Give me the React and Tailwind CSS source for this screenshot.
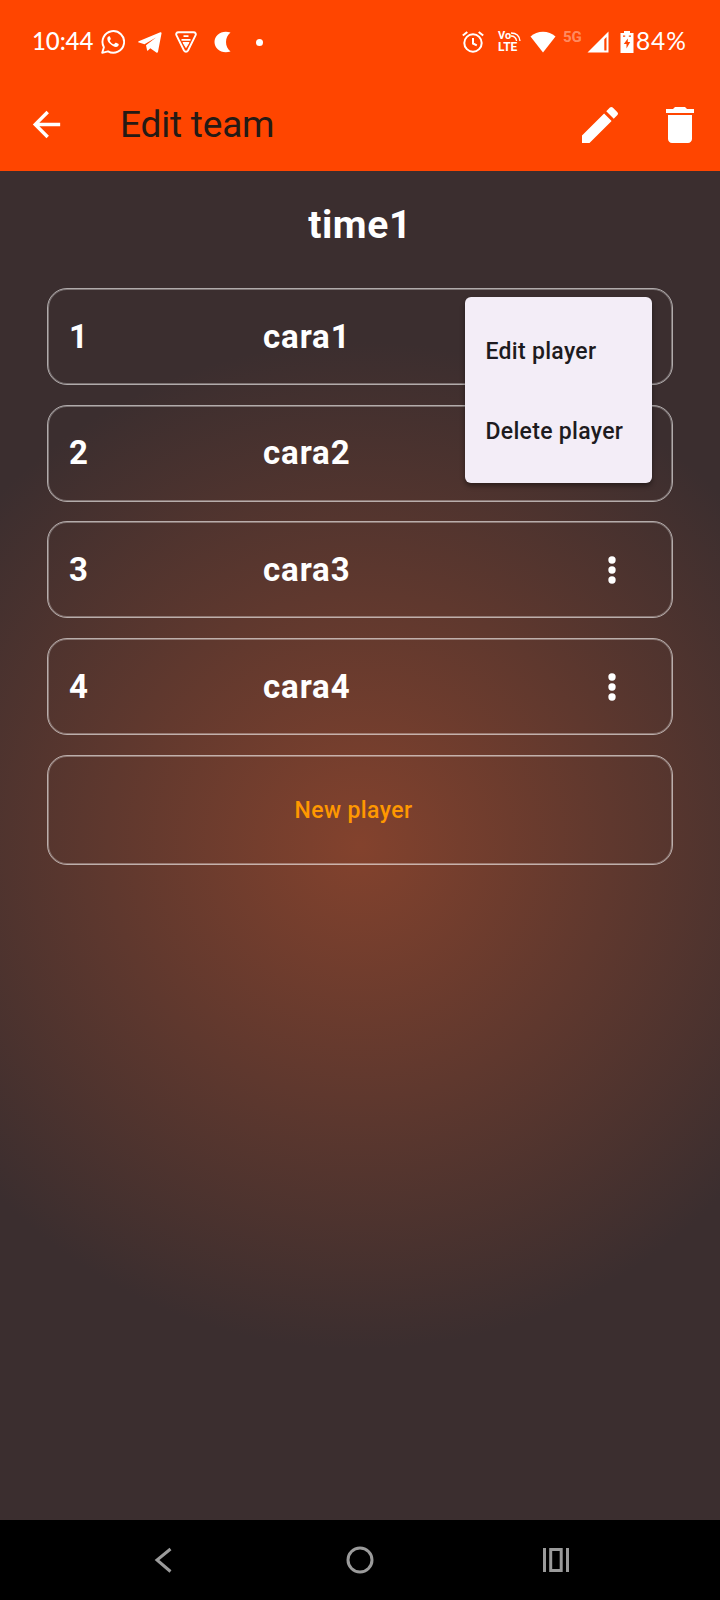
const players = ["cara1", "cara2", "cara3", "cara4"];

const cardClass =
  "rounded-[20px] border border-white/60 shadow-[inset_0_0_0_1px_rgba(255,255,255,0.32)]";

function StatusBar() {
  return (
    <div className="flex h-[84px] items-center pl-8 text-white">
      <span className="w-[62px] pb-[2px] font-['Lato'] text-[24px] leading-none font-medium tracking-[-0.1px]">10:44</span>
      <svg className="ml-[7px] h-6 w-6 shrink-0" viewBox="0 0 24 24" fill="none">
        <path d="M1.2 22.8 L2.9 17.2 A10.8 10.8 0 1 1 7 21.3 Z" stroke="currentColor" strokeWidth="1.9" strokeLinejoin="round" />
        <path d="M8.1 6.3c-.8 0-1.8 1-1.8 2.4 0 1.8 1.2 3.6 2.7 5.1 2 2 4.1 3.1 6 3.1 1.5 0 2.7-1 2.7-2.2 0-.5-.1-.7-.5-.9l-2.100-1c-.4-.2-.6-.1-.9.2l-.9 1.100c-.2.3-.5.3-.8.2-1.600-.7-2.900-1.900-3.700-3.400-.1-.3 0-.5.200-.7l.7-.9c.1-.2.2-.4.1-.6l-.9-2.100c-.1-.2-.3-.3-.8-.3z" fill="currentColor" />
      </svg>
      <svg className="ml-[13px] h-[21px] w-6 shrink-0" viewBox="0 0 24 21" fill="currentColor">
        <path d="M.7 9.3 22.3.3c.8-.3 1.400.2 1.200 1.100L20 19.800c-.2 1-.9 1.300-1.700.8L12.300 16.300l-2.300 2.200c-.4.4-.9.4-1-.4L8 13.200 18 5.500 6.500 12.300 1 10.600c-.9-.3-1-.9-.3-1.300z" />
      </svg>
      <svg className="ml-[13px] h-[22px] w-[22px] shrink-0" viewBox="0 0 22 22" fill="none" stroke="currentColor" strokeLinejoin="round">
        <path d="M3.500 1.200h15c2 0 2.800 1.600 2 3.200L13 19.500c-.9 1.600-3.100 1.600-4 0L1.500 4.400c-.8-1.600 0-3.200 2-3.200z" strokeWidth="1.900" />
        <path d="M8.500 5.200h5M6.500 8.800h9" strokeWidth="1.800" />
        <path d="M8 11.500h6L11 16.500z" fill="currentColor" strokeWidth="1" />
      </svg>
      <svg className="ml-[17px] h-[22px] w-[17px] shrink-0" viewBox="0 0 17 22" fill="currentColor">
        <path d="M16.500 1.500C13.500 4 12 7.300 12 11s1.500 7 4.500 9.500c-8.500 2.800-16-2.300-16-9.500s7.500-12.300 16-9.500z" />
      </svg>
      <span className="ml-[25px] h-[7px] w-[7px] shrink-0 rounded-full bg-white" />

      <svg className="ml-[199px] h-[22px] w-[22px] shrink-0" viewBox="0 0 22 22" fill="none" stroke="currentColor" strokeWidth="2">
        <circle cx="11" cy="12" r="8.700" />
        <path d="M11 7v5.500l3.800 1.800M.8 4.600 5.300.9M21.200 4.600 16.700.9" strokeWidth="2" />
      </svg>
      <div className="ml-[14px] flex w-6 shrink-0 flex-col font-['Roboto'] font-bold">
        <div className="flex h-[10px] items-center">
          <span className="text-[11px] leading-[10px]">Vo</span>
          <svg className="h-[9px] w-[10px]" viewBox="0 0 10 9" fill="none" stroke="currentColor" strokeWidth="1.300">
            <path d="M0 1c5 0 8.500 3 9 8M0 4c3 0 5 1.800 5.600 5" />
          </svg>
        </div>
        <span className="text-[12px] leading-[12px]">LTE</span>
      </div>
      <svg className="ml-[8px] h-[22px] w-[26px] shrink-0" viewBox="0 0 26 22" fill="currentColor">
        <path d="M.5 5.500C7-.9 19-.9 25.500 5.500L13 21.500z" />
      </svg>
      <span className="mb-[9px] ml-[7px] w-[22px] font-['Roboto'] text-[15px] leading-none font-bold text-white/40">5G</span>
      <svg className="ml-[2px] h-[22px] w-[22px] shrink-0" viewBox="0 0 22 22" fill="currentColor">
        <path fillRule="evenodd" d="M21.500.5V21.500H.5zM19.500 6 17.300 8.200V19.500h2.200z" />
      </svg>
      <svg className="ml-[11px] h-[22px] w-[14px] shrink-0" viewBox="0 0 14 22" fill="currentColor">
        <path fillRule="evenodd" d="M4 0h6v2h3.500v20H.5V2H4zM7.800 7.500 3.800 13h2.700v4.500l3.700-6.500H7.800zM3 4.500v1.300h2.200V4.500zM8.800 4.500v1.300H11V4.500z" />
      </svg>
      <span className="ml-[2px] pb-[2px] font-['Lato'] text-[24.5px] leading-none tracking-[0.9px]">84%</span>
    </div>
  );
}

function AppBar() {
  return (
    <div className="flex h-[87px] items-center pb-[6px] text-white">
      <svg className="ml-[26px] h-[41px] w-[41px] shrink-0" viewBox="0 0 24 24" fill="currentColor">
        <path d="M20 11H7.830l5.590-5.590L12 4l-8 8 8 8 1.410-1.410L7.830 13H20v-2z" />
      </svg>
      <h1 className="ml-[53px] flex-1 pb-px font-['Roboto'] text-[37px] leading-none tracking-[-0.2px] text-[#251a15]">Edit team</h1>
      <svg className="h-12 w-12 shrink-0" viewBox="0 0 24 24" fill="currentColor">
        <path d="M3 17.250V21h3.750L17.810 9.940l-3.750-3.750L3 17.250zM20.710 7.040a1 1 0 0 0 0-1.410l-2.340-2.340a1 1 0 0 0-1.410 0l-1.830 1.830 3.750 3.750 1.830-1.830z" />
      </svg>
      <svg className="mr-4 ml-8 h-12 w-12 shrink-0" viewBox="0 0 24 24" fill="currentColor">
        <path d="M6 19c0 1.100.9 2 2 2h8c1.100 0 2-.9 2-2V7H6v12zM19 4h-3.500l-1-1h-5l-1 1H5v2h14V4z" />
      </svg>
    </div>
  );
}

function PlayerCard({ number, name }) {
  return (
    <li className={"flex h-[97px] items-center text-[33px] font-bold " + cardClass}>
      <span className="w-[215px] pl-[21px]">{number}</span>
      <span className="flex-1 tracking-[0.9px]">{name}</span>
      <svg className="mr-[39px] h-[42px] w-[42px]" viewBox="0 0 24 24" fill="currentColor">
        <circle cx="12" cy="6.300" r="2.100" />
        <circle cx="12" cy="12" r="2.100" />
        <circle cx="12" cy="17.700" r="2.100" />
      </svg>
    </li>
  );
}

function PlayerMenu() {
  return (
    <div className="absolute top-[126px] left-[465px] flex h-[186px] w-[187px] flex-col rounded-[6px] bg-[#f3edf7] pt-[14px] pl-[20.5px] text-[23px] font-medium tracking-[0.3px] text-[#1d1b20] shadow-[0_3px_5px_rgba(0,0,0,0.4)]">
      <button className="h-20 shrink-0 pt-[3px] text-left">Edit player</button>
      <button className="h-20 shrink-0 pt-[3px] text-left whitespace-nowrap">Delete player</button>
    </div>
  );
}

function NavigationBar() {
  return (
    <nav className="flex h-20 items-center justify-between bg-black px-[150px] text-[#9b9b9b]">
      <svg className="h-[30px] w-[28px]" viewBox="0 0 28 30" fill="none" stroke="currentColor" strokeWidth="3">
        <path d="M20.500 4 7 15l13.500 11.500" />
      </svg>
      <svg className="h-[30px] w-[30px]" viewBox="0 0 30 30" fill="none" stroke="currentColor" strokeWidth="3">
        <circle cx="15" cy="15" r="12" />
      </svg>
      <svg className="h-[30px] w-[28px]" viewBox="0 0 28 30" fill="none" stroke="currentColor" strokeWidth="3">
        <path d="M2.500 3v24M25.500 3v24M8.700 4.500h10.500v21H8.700z" />
      </svg>
    </nav>
  );
}

export default function App() {
  return (
    <div className="flex h-[1600px] w-[720px] flex-col overflow-hidden font-['Roboto',sans-serif]">
      <header className="bg-[#ff4500]">
        <StatusBar />
        <AppBar />
      </header>
      <main className="relative flex-1 bg-[radial-gradient(circle_504px_at_center,#83422d,#3b2e2f)] px-[47px] text-white">
        <h2 className="pt-[29px] text-center text-[39px] leading-[50px] font-bold tracking-[0.6px]">time1</h2>
        <ul className="mt-[38px] flex flex-col gap-[19.7px]">
          {players.map((name, i) => (
            <PlayerCard key={name} number={i + 1} name={name} />
          ))}
          <li className={"flex h-[110px] items-center justify-center pt-[2px] pr-[13px] " + cardClass}>
            <button className="text-[23px] font-medium tracking-[0.4px] text-[#ff9800]">New player</button>
          </li>
        </ul>
        <PlayerMenu />
      </main>
      <NavigationBar />
    </div>
  );
}
